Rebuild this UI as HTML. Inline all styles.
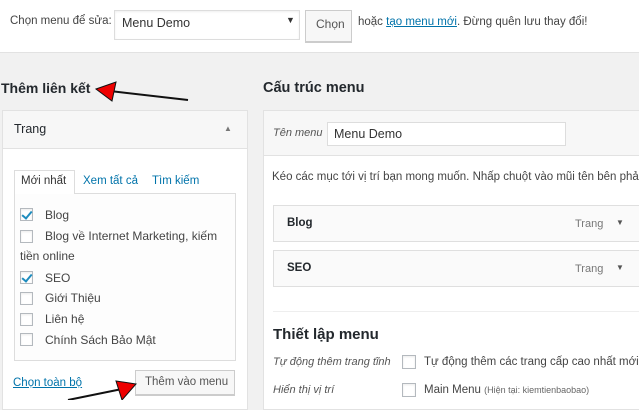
<!DOCTYPE html>
<html><head><meta charset="utf-8"><style>
*{margin:0;padding:0;box-sizing:border-box}
body{width:639px;height:400px;overflow:hidden;background:#f1f1f1;font-family:"Liberation Sans","DejaVu Sans",sans-serif;font-size:12px;color:#444;position:relative}
.a{position:absolute;white-space:nowrap}
.box{position:absolute;background:#fff;border:1px solid #e2e2e2}
.cb{position:absolute;width:13px;height:13px;border:1px solid #b4b9be;background:#fff;box-shadow:inset 0 1px 2px rgba(0,0,0,.08)}
.ck::after{content:"";position:absolute;left:3px;top:0px;width:4px;height:8px;border:solid #1e8cbe;border-width:0 2px 2px 0;transform:rotate(40deg)}
.link{color:#0073aa;text-decoration:underline}
h2{position:absolute;font-size:14px;font-weight:bold;color:#23282d}
</style></head><body>
<div class="box" style="left:0;top:0;width:639px;height:53px;border-width:0 0 1px 0"></div>
<div class="a" style="left:10px;top:15px;font-size:11.5px">Chọn menu để sửa:</div>
<div class="box" style="left:114px;top:10px;width:186px;height:30px;border-color:#ddd;box-shadow:inset 0 1px 2px rgba(0,0,0,.07)"></div>
<div class="a" style="left:122px;top:16px;font-size:12.5px;color:#333">Menu Demo</div>
<div class="a" style="left:286px;top:15px;font-size:9px;color:#333">▼</div>
<div class="box" style="left:305px;top:10px;width:47px;height:32px;background:#f7f7f7;border-color:#ccc;box-shadow:0 1px 0 #ccc"></div>
<div class="a" style="left:316px;top:17px;font-size:12px;color:#555">Chọn</div>
<div class="a" style="left:358px;top:16px;font-size:11.5px">hoặc <span class="link">tạo menu mới</span>. Đừng quên lưu thay đổi!</div>

<h2 style="left:1px;top:80px">Thêm liên kết</h2>
<h2 style="left:263px;top:80px;font-size:14.5px">Cấu trúc menu</h2>

<div class="box" style="left:2px;top:110px;width:246px;height:300px"></div>
<div class="a" style="left:2px;top:110px;width:246px;height:39px;background:#f7f7f7;border-bottom:1px solid #e5e5e5;border:1px solid #e2e2e2"></div>
<div class="a" style="left:14px;top:122px;font-size:12.5px;color:#23282d">Trang</div>
<div class="a" style="left:224px;top:124px;font-size:8px;color:#777">▲</div>
<div class="a" style="left:14px;top:170px;width:61px;height:24px;border:1px solid #ddd;border-bottom:0;background:#fff;z-index:2"></div>
<div class="a" style="left:21px;top:175px;font-size:11.5px;color:#333;z-index:3">Mới nhất</div>
<div class="a" style="left:83px;top:175px;font-size:11.5px;color:#0073aa">Xem tất cả</div>
<div class="a" style="left:152px;top:175px;font-size:11.5px;color:#0073aa">Tìm kiếm</div>
<div class="box" style="left:14px;top:193px;width:222px;height:168px;border-color:#ddd;background:#fdfdfd"></div>
<div class="cb ck" style="left:20px;top:208px"></div><div class="a" style="left:45px;top:208px">Blog</div>
<div class="cb" style="left:20px;top:230px"></div><div class="a" style="left:45px;top:229px">Blog về Internet Marketing, kiếm</div>
<div class="a" style="left:20px;top:249px">tiền online</div>
<div class="cb ck" style="left:20px;top:271px"></div><div class="a" style="left:45px;top:271px">SEO</div>
<div class="cb" style="left:20px;top:292px"></div><div class="a" style="left:45px;top:291px">Giới Thiệu</div>
<div class="cb" style="left:20px;top:313px"></div><div class="a" style="left:45px;top:312px">Liên hệ</div>
<div class="cb" style="left:20px;top:333px"></div><div class="a" style="left:45px;top:333px">Chính Sách Bảo Mật</div>
<div class="a link" style="left:13px;top:377px;font-size:11.5px">Chọn toàn bộ</div>
<div class="box" style="left:135px;top:370px;width:100px;height:25px;background:#f7f7f7;border-color:#ccc;box-shadow:0 1px 0 #ccc"></div>
<div class="a" style="left:145px;top:376px;font-size:11.5px;color:#555">Thêm vào menu</div>

<div class="box" style="left:263px;top:110px;width:390px;height:300px"></div>
<div class="a" style="left:263px;top:110px;width:390px;height:46px;background:#f7f7f7;border:1px solid #e2e2e2"></div>
<div class="a" style="left:273px;top:127px;font-size:11px;font-style:italic;color:#555">Tên menu</div>
<div class="box" style="left:327px;top:122px;width:239px;height:24px;border-color:#ddd"></div>
<div class="a" style="left:334px;top:127px;font-size:12.5px;color:#333">Menu Demo</div>
<div class="a" style="left:272px;top:171px;font-size:11.5px">Kéo các mục tới vị trí bạn mong muốn. Nhấp chuột vào mũi tên bên phải</div>
<div class="box" style="left:273px;top:205px;width:380px;height:37px;background:#fafafa;border-color:#dfdfdf"></div>
<div class="a" style="left:287px;top:217px;font-weight:bold;color:#23282d;font-size:11.5px">Blog</div>
<div class="a" style="left:575px;top:218px;font-size:11px;color:#777">Trang</div>
<div class="a" style="left:616px;top:218px;font-size:8px;color:#555">▼</div>
<div class="box" style="left:273px;top:250px;width:380px;height:37px;background:#fafafa;border-color:#dfdfdf"></div>
<div class="a" style="left:287px;top:262px;font-weight:bold;color:#23282d;font-size:11.5px">SEO</div>
<div class="a" style="left:575px;top:263px;font-size:11px;color:#777">Trang</div>
<div class="a" style="left:616px;top:263px;font-size:8px;color:#555">▼</div>
<div class="a" style="left:273px;top:311px;width:380px;height:1px;background:#eee"></div>
<div class="a" style="left:273px;top:326px;font-size:15px;font-weight:bold;color:#23282d">Thiết lập menu</div>
<div class="a" style="left:273px;top:356px;font-size:11px;font-style:italic;color:#555">Tự động thêm trang tĩnh</div>
<div class="cb" style="left:402px;top:355px;width:14px;height:14px"></div>
<div class="a" style="left:424px;top:356px;font-size:11.5px">Tự động thêm các trang cấp cao nhất mới v</div>
<div class="a" style="left:273px;top:384px;font-size:11px;font-style:italic;color:#555">Hiển thị vị trí</div>
<div class="cb" style="left:402px;top:383px;width:14px;height:14px"></div>
<div class="a" style="left:424px;top:384px;font-size:11.5px">Main Menu <span style="font-size:9px;color:#666">(Hiện tại: kiemtienbaobao)</span></div>

<svg class="a" style="left:0;top:0" width="639" height="400">
<line x1="188" y1="100" x2="110" y2="91" stroke="#111" stroke-width="2"/>
<polygon points="96,89 116,82 112,101" fill="#e00" stroke="#111" stroke-width="1"/>
<line x1="68" y1="400" x2="122" y2="389" stroke="#111" stroke-width="2"/>
<polygon points="136,384 116,381 122,400" fill="#e00" stroke="#111" stroke-width="1"/>
</svg>
</body></html>
